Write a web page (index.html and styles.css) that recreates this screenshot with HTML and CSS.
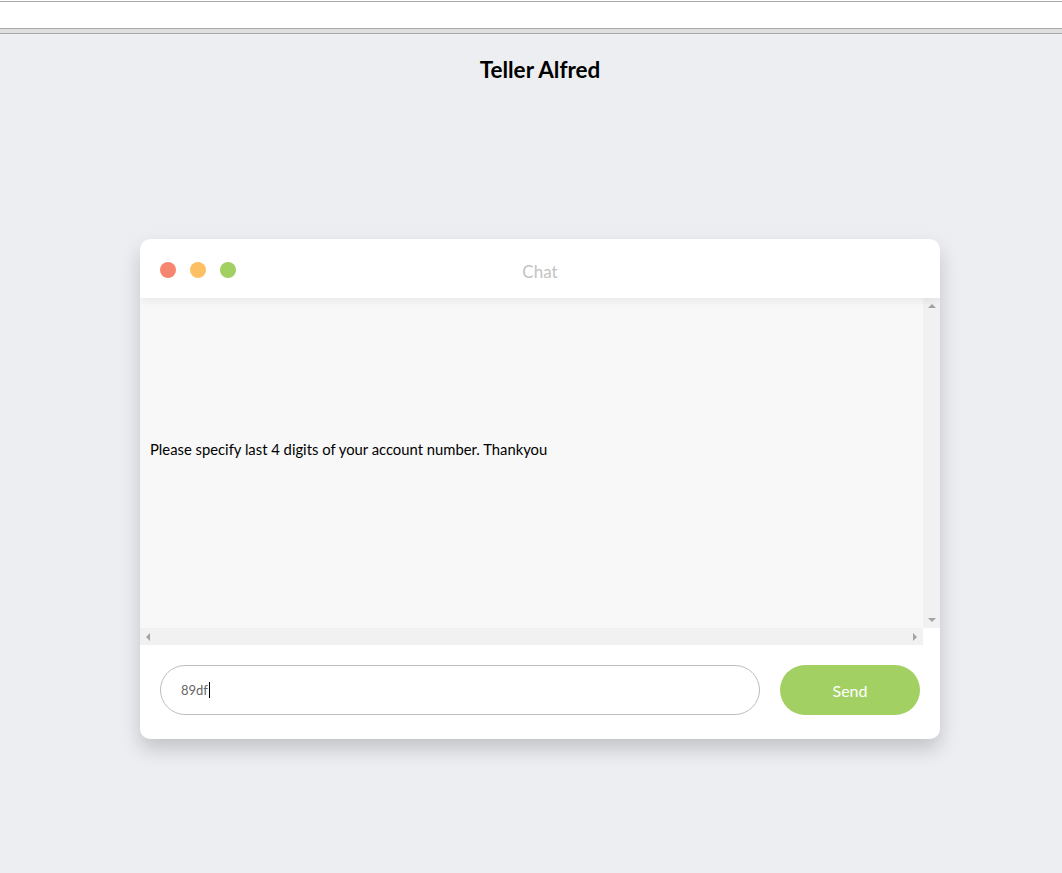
FILE: index.html
```html
<!DOCTYPE html>
<html lang="en">
<head>
    <meta charset="UTF-8">
    <meta name="viewport" content="width=device-width, initial-scale=1.0">
    <title>Teller Alfred</title>
    <link rel="stylesheet" href="styles.css">
</head>
<body>
    <div class="frame">
        <div class="frame-bar"></div>
    </div>
    <div class="frame-gap"></div>

    <div class="page">
        <h1 class="title">Teller Alfred</h1>

        <div class="chat">
            <div class="chat-header">
                <div class="dots">
                    <span class="dot red"></span>
                    <span class="dot yellow"></span>
                    <span class="dot green"></span>
                </div>
                <div class="chat-title">Chat</div>
            </div>
            <div class="chat-body">
                <div class="messages">
                    <p class="message">Please specify last 4 digits of your account number. Thankyou</p>
                </div>
                <div class="vscroll">
                    <span class="arrow up"></span>
                    <span class="arrow down"></span>
                </div>
                <div class="hscroll">
                    <span class="arrow left"></span>
                    <span class="arrow right"></span>
                </div>
                <div class="corner"></div>
            </div>
            <div class="chat-footer">
                <div class="chat-input">89df<span class="caret"></span></div>
                <button class="send-button">Send</button>
            </div>
        </div>
    </div>
</body>
</html>
```

FILE: styles.css
```css
body {
    font-family: Lato, "Open Sans", sans-serif;
    background-color: #edeef2;
    margin: 0;
    padding: 0;
}
.frame {
    background-color: #fff;
    padding-top: 1px;
}
.frame-bar {
    height: 26px;
    border-top: 1px solid #a9a9a9;
    border-bottom: 1px solid #a9a9a9;
}
.frame-gap {
    height: 4px;
    background-color: #dedede;
    border-bottom: 1px solid #a9a9a9;
}
.page {
    padding: 0 0 40px 18px;
}
.title {
    margin: 23px 0 0;
    text-align: center;
    font-size: 22.5px;
    font-weight: bold;
    line-height: 26px;
    color: #000;
}
.chat {
    width: 800px;
    margin: 156px auto 0;
    background-color: #fff;
    border-radius: 10px;
    box-shadow: 0 10px 20px rgba(0,0,0,0.18);
    overflow: hidden;
}
.chat-header {
    position: relative;
    height: 59px;
    display: flex;
    align-items: center;
    justify-content: center;
    box-shadow: 0 2px 10px rgba(0,0,0,0.08);
    z-index: 1;
}
.dots {
    position: absolute;
    left: 20px;
    top: 23px;
    display: flex;
    gap: 14px;
}
.dot {
    width: 16px;
    height: 16px;
    border-radius: 50%;
}
.red { background-color: #f6866f; }
.yellow { background-color: #fdbf63; }
.green { background-color: #a3d063; }
.chat-title {
    font-size: 17px;
    color: #c3c3c3;
    margin-top: 6px;
}
.chat-body {
    display: grid;
    grid-template-columns: 783px 17px;
    grid-template-rows: 330px 17px;
}
.messages {
    background-color: #f8f8f8;
    display: flex;
    align-items: center;
}
.message {
    margin: 0 0 28px 10px;
    font-size: 14.8px;
    color: #000;
}
.vscroll, .hscroll {
    background-color: #f1f1f1;
    display: flex;
    justify-content: space-between;
    align-items: center;
}
.vscroll {
    flex-direction: column;
    padding: 6px 0;
}
.hscroll {
    padding: 0 6px;
}
.corner {
    background-color: #fff;
}
.arrow {
    width: 0;
    height: 0;
    border: 4px solid transparent;
}
.up { border-bottom-color: #a3a3a3; border-top-width: 0; }
.down { border-top-color: #a3a3a3; border-bottom-width: 0; }
.left { border-right-color: #a3a3a3; border-left-width: 0; }
.right { border-left-color: #a3a3a3; border-right-width: 0; }
.chat-footer {
    display: flex;
    gap: 20px;
    padding: 20px 20px 24px;
}
.chat-input {
    flex: 1;
    height: 48px;
    border: 1px solid #bdbdbd;
    border-radius: 25px;
    padding: 0 20px;
    display: flex;
    align-items: center;
    font-size: 13px;
    color: #666;
}
.caret {
    width: 1px;
    height: 16px;
    background-color: #000;
    margin-left: 1px;
}
.send-button {
    width: 140px;
    height: 50px;
    border: none;
    border-radius: 25px;
    background-color: #a3d063;
    color: #fff;
    font-family: inherit;
    font-size: 16px;
    cursor: pointer;
}
```
